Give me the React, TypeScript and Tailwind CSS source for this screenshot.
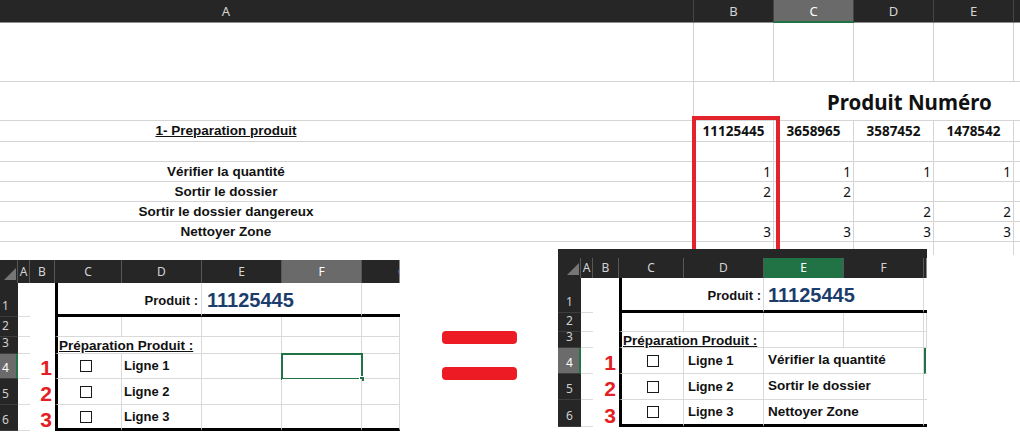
import React from "react";

type Sheet = {
  hd: string; a: string; b: string; c: string; d: string; e: string; f: string; g: string;
  cd: string; ef: string;
  top: string; head: string;
  h: string[];
  rh: string;
  act: string; actCls: string; gLabel: string; gText: string;
  pr: string; p1: string; n1: string; pl1: string;
  lig: string; p3: string; chk: string;
  selF?: boolean;
  notes?: string[];
};

const LEFT: Sheet = {
  hd: "w-[18px]", a: "w-[12px]", b: "w-[25px]", c: "w-[67px]", d: "w-[80px]", e: "w-[80px]", f: "w-[80px]", g: "w-[38px]",
  cd: "w-[147px]", ef: "w-[160px]",
  top: "pt-0", head: "h-[23px]",
  h: ["h-[34px]", "h-[20px]", "h-[17px]", "h-[25px]", "h-[26px]", "h-[26px]"],
  rh: "pl-[2px]",
  act: "F", actCls: "bg-[#6a6a6a] text-white", gLabel: "pl-[36px]", gText: "G",
  pr: "pr-[3px]", p1: "pb-[7px]", n1: "pb-[4px]", pl1: "pl-[5px]",
  lig: "pl-[2px]", p3: "pb-[1px]", chk: "justify-start pl-[22px]",
  selF: true,
};

const RIGHT: Sheet = {
  hd: "w-[23px]", a: "w-[12px]", b: "w-[26px]", c: "w-[65px]", d: "w-[80px]", e: "w-[80px]", f: "w-[80px]", g: "w-[3px]",
  cd: "w-[145px]", ef: "w-[160px]",
  top: "pt-[9px]", head: "h-[20px]",
  h: ["h-[35px]", "h-[19px]", "h-[16px]", "h-[26px]", "h-[26px]", "h-[27px]"],
  rh: "pl-[8px]",
  act: "E", actCls: "bg-[#217346] text-white", gLabel: "", gText: "",
  pr: "pr-[2px]", p1: "pb-[8px]", n1: "pb-[5px]", pl1: "pl-[4px]",
  lig: "pl-[4px]", p3: "pb-0", chk: "justify-center",
  notes: ["Vérifier la quantité", "Sortir le dossier", "Nettoyer Zone"],
};

const steps = [
  { label: "Vérifier la quantité", vals: ["1", "1", "1", "1"] },
  { label: "Sortir le dossier", vals: ["2", "2", "", ""] },
  { label: "Sortir le dossier dangereux", vals: ["", "", "2", "2"] },
  { label: "Nettoyer Zone", vals: ["3", "3", "3", "3"] },
];

function MainRow({ h, label, vals = [], bold, under }: { h: string; label?: string; vals?: string[]; bold?: boolean; under?: boolean }) {
  return (
    <div className={`flex ${h}`}>
      <div className="flex w-[694px] shrink-0 items-center border-b border-r border-[#d4d4d4] pt-[1px]">
        <span className={`w-[452px] text-center font-['Liberation_Sans',Arial,sans-serif] text-[13.5px] font-bold text-[#111] ${under ? "underline" : ""}`}>
          {label}
        </span>
      </div>
      {[0, 1, 2, 3, 4].map((i) => (
        <div
          key={i}
          className={`flex w-[80px] shrink-0 items-center border-b border-r border-[#d4d4d4] pt-[1px] font-['Noto_Sans',sans-serif] text-[13.5px] text-[#111] ${bold ? "justify-center font-bold" : "justify-end pr-[2px]"}`}
        >
          {vals[i]}
        </div>
      ))}
    </div>
  );
}

function MainSheet() {
  const hcell = "flex w-[80px] shrink-0 items-center justify-center border-b border-r border-b-[#8e8e8e] border-r-[#454545] pt-[2px]";
  return (
    <div className="h-[255px] w-[1020px] overflow-hidden">
      {/* column headers */}
      <div className="flex h-[23px] bg-[#262626] font-['Noto_Sans',sans-serif] text-[13px] text-[#d4d4d4]">
        <div className="flex w-[694px] shrink-0 items-center border-b border-r border-b-[#8e8e8e] border-r-[#454545] pt-[2px]">
          <span className="w-[452px] text-center">A</span>
        </div>
        <div className={hcell}>B</div>
        <div className="flex w-[80px] shrink-0 items-center justify-center border-b-2 border-r border-b-[#217346] border-r-[#454545] bg-[#6a6a6a] pt-[2px] text-white">C</div>
        <div className={hcell}>D</div>
        <div className={hcell}>E</div>
        <div className={hcell} />
      </div>

      <MainRow h="h-[59px]" />

      {/* Produit Numéro */}
      <div className="flex h-[39px]">
        <div className="w-[694px] shrink-0 border-b border-r border-[#d4d4d4]" />
        <div className="flex w-[400px] shrink-0 items-end border-b border-[#d4d4d4] pb-[8px] pl-[133px] font-['Noto_Sans',sans-serif] text-[20.5px] font-bold leading-none text-[#111]">
          Produit Numéro
        </div>
      </div>

      <MainRow h="h-[21px]" label="1- Preparation produit" under bold vals={["11125445", "3658965", "3587452", "1478542"]} />
      <MainRow h="h-[20px]" />
      {steps.map((s) => (
        <MainRow key={s.label} h="h-[20px]" label={s.label} vals={s.vals} />
      ))}
      <MainRow h="h-[20px]" />
    </div>
  );
}

function MiniSheet({ s }: { s: Sheet }) {
  const letters = ["A", "B", "C", "D", "E", "F"];
  const widths = [s.a, s.b, s.c, s.d, s.e, s.f];
  const gl = "border-r border-r-[#d9d9d9]";
  const bot = (n: number) => (n === 1 || n === 6 ? "border-b-[3px] border-b-black" : "border-b border-b-[#d9d9d9]");
  const thick = "border-l-[3px] border-l-black";

  return (
    <div className={`bg-[#262626] ${s.top} font-['Liberation_Sans',Arial,sans-serif] text-[#111]`}>
      {/* column headers */}
      <div className={`flex ${s.head} font-['Noto_Sans',sans-serif] text-[12px] text-[#d4d4d4]`}>
        <div className={`${s.hd} flex shrink-0 items-end justify-end border-r border-[#575757] pb-[3px] pr-[1px]`}>
          <svg width="12" height="12" viewBox="0 0 12 12">
            <polygon points="12,0 12,12 0,12" fill="#767676" />
          </svg>
        </div>
        {letters.map((l, i) => (
          <div
            key={l}
            className={`${widths[i]} flex shrink-0 items-center justify-center border-r border-[#575757] ${l === s.act ? s.actCls : ""}`}
          >
            {l}
          </div>
        ))}
        <div className={`${s.g} flex shrink-0 items-center overflow-hidden border-r border-[#8a8a8a] ${s.gLabel}`}>{s.gText}</div>
      </div>

      {[1, 2, 3, 4, 5, 6].map((n) => (
        <div key={n} className={`flex ${s.h[n - 1]}`}>
          <div
            className={`${s.hd} flex shrink-0 items-end border-b border-b-[#3d3d3d] pb-[3px] ${s.rh} font-['Noto_Sans',sans-serif] text-[12px] leading-[14px] ${n === 4 ? "border-r-2 border-r-[#217346] bg-[#6b6b6b] text-white" : "text-[#cfcfcf]"}`}
          >
            {n}
          </div>
          <div className={`${s.a} shrink-0 border-b border-b-[#dcdcdc] bg-white`} />
          <div className={`${s.b} flex shrink-0 items-end justify-end bg-white pb-[1px] pr-[3px] text-[21px] font-bold leading-none text-[#e31e24]`}>
            {n >= 4 ? n - 3 : ""}
          </div>

          {n === 1 && (
            <>
              <div className={`${s.cd} flex shrink-0 items-end justify-end bg-white ${thick} ${gl} ${bot(n)} ${s.p1} ${s.pr} text-[13px] font-bold leading-none`}>
                Produit :
              </div>
              <div className={`${s.ef} flex shrink-0 items-end bg-white ${gl} ${bot(n)} ${s.n1} ${s.pl1} text-[20px] font-bold leading-none text-[#1c3d6b]`}>
                11125445
              </div>
              <div className={`${s.g} shrink-0 bg-white ${bot(n)}`} />
            </>
          )}

          {n === 2 && (
            <>
              <div className={`${s.c} shrink-0 bg-white ${thick} ${gl} ${bot(n)}`} />
              <div className={`${s.d} shrink-0 bg-white ${gl} ${bot(n)}`} />
              <div className={`${s.e} shrink-0 bg-white ${gl} ${bot(n)}`} />
              <div className={`${s.f} shrink-0 bg-white ${gl} ${bot(n)}`} />
              <div className={`${s.g} shrink-0 bg-white ${gl} ${bot(n)}`} />
            </>
          )}

          {n === 3 && (
            <>
              <div className={`${s.cd} flex shrink-0 items-end whitespace-nowrap bg-white ${thick} ${gl} ${bot(n)} ${s.p3} pl-[1px] text-[13.5px] font-bold leading-none underline`}>
                Préparation Produit :
              </div>
              <div className={`${s.e} shrink-0 bg-white ${gl} ${bot(n)}`} />
              <div className={`${s.f} shrink-0 bg-white ${gl} ${bot(n)}`} />
              <div className={`${s.g} shrink-0 bg-white ${gl} ${bot(n)}`} />
            </>
          )}

          {n >= 4 && (
            <>
              <div className={`${s.c} flex shrink-0 items-center bg-white ${s.chk} ${thick} ${gl} ${bot(n)}`}>
                <div className="h-[12px] w-[12px] border border-[#1a1a1a]" />
              </div>
              <div className={`${s.d} flex shrink-0 items-center bg-white ${gl} ${bot(n)} ${s.lig} text-[13px] font-bold`}>
                Ligne {n - 3}
              </div>
              {s.notes ? (
                <>
                  <div className={`${s.ef} flex shrink-0 items-center whitespace-nowrap bg-white ${gl} ${bot(n)} pl-[4px] text-[13.5px] font-bold`}>
                    {s.notes[n - 4]}
                  </div>
                  <div className={`${s.g} shrink-0 bg-white ${bot(n)} ${n === 4 ? "border-l-2 border-l-[#217346]" : ""}`} />
                </>
              ) : (
                <>
                  <div className={`${s.e} shrink-0 bg-white ${gl} ${bot(n)}`} />
                  <div className={`${s.f} relative shrink-0 bg-white ${gl} ${bot(n)}`}>
                    {s.selF && n === 4 && (
                      <div className="absolute -left-[1px] -top-[1px] h-[27px] w-[82px] border-2 border-[#217346]">
                        <div className="absolute -bottom-[4px] -right-[4px] h-[6px] w-[6px] border border-white bg-[#217346]" />
                      </div>
                    )}
                  </div>
                  <div className={`${s.g} shrink-0 bg-white ${gl} ${bot(n)}`} />
                </>
              )}
            </>
          )}
        </div>
      ))}
    </div>
  );
}

export default function App() {
  return (
    <div className="relative h-[441px] w-[1020px] overflow-hidden bg-white">
      <MainSheet />

      {/* before = after */}
      <div className="flex items-start">
        <div className="mt-[5px] w-[400px] overflow-hidden">
          <MiniSheet s={LEFT} />
        </div>
        <div className="ml-[42px] mt-[76px] flex flex-col gap-[23px]">
          <div className="h-[13px] w-[75px] rounded-[4px] bg-[#ed1c24]" />
          <div className="h-[13px] w-[75px] rounded-[4px] bg-[#ed1c24]" />
        </div>
        <div className="relative z-10 -mt-[6px] ml-[41px] w-[369px] overflow-hidden">
          <MiniSheet s={RIGHT} />
        </div>
      </div>

      {/* highlight on column B */}
      <div className="absolute left-[692px] top-[116px] h-[133px] w-[88px] border-4 border-b-0 border-[#e3232c]" />
    </div>
  );
}
